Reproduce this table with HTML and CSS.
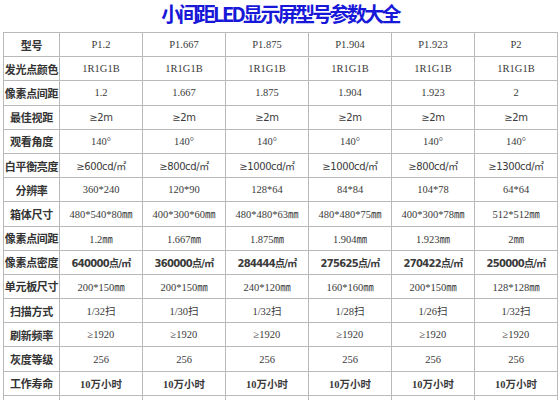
FILE: index.html
```html
<!DOCTYPE html>
<html lang="zh-CN">
<head>
<meta charset="utf-8">
<title>小间距LED显示屏型号参数大全</title>
<link rel="stylesheet" href="styles.css">
</head>
<body>
<div class="page">
<h1 class="title">小间距LED显示屏型号参数大全</h1>
<table class="spec">
  <colgroup>
    <col class="c-label"><col><col><col><col><col><col>
  </colgroup>
  <tbody>
    <tr><th>型号</th><td>P1.2</td><td>P1.667</td><td>P1.875</td><td>P1.904</td><td>P1.923</td><td>P2</td></tr>
    <tr><th>发光点颜色</th><td>1R1G1B</td><td>1R1G1B</td><td>1R1G1B</td><td>1R1G1B</td><td>1R1G1B</td><td>1R1G1B</td></tr>
    <tr><th>像素点间距</th><td>1.2</td><td>1.667</td><td>1.875</td><td>1.904</td><td>1.923</td><td>2</td></tr>
    <tr class="sans"><th>最佳视距</th><td>≥2m</td><td>≥2m</td><td>≥2m</td><td>≥2m</td><td>≥2m</td><td>≥2m</td></tr>
    <tr><th>观看角度</th><td>140°</td><td>140°</td><td>140°</td><td>140°</td><td>140°</td><td>140°</td></tr>
    <tr class="sans"><th>白平衡亮度</th><td>≥600cd/㎡</td><td>≥800cd/㎡</td><td>≥1000cd/㎡</td><td>≥1000cd/㎡</td><td>≥800cd/㎡</td><td>≥1300cd/㎡</td></tr>
    <tr><th>分辨率</th><td>360*240</td><td>120*90</td><td>128*64</td><td>84*84</td><td>104*78</td><td>64*64</td></tr>
    <tr><th>箱体尺寸</th><td>480*540*80㎜</td><td>400*300*60㎜</td><td>480*480*63㎜</td><td>480*480*75㎜</td><td>400*300*78㎜</td><td>512*512㎜</td></tr>
    <tr><th>像素点间距</th><td>1.2㎜</td><td>1.667㎜</td><td>1.875㎜</td><td>1.904㎜</td><td>1.923㎜</td><td>2㎜</td></tr>
    <tr class="sans bold"><th>像素点密度</th><td>640000点/㎡</td><td>360000点/㎡</td><td>284444点/㎡</td><td>275625点/㎡</td><td>270422点/㎡</td><td>250000点/㎡</td></tr>
    <tr><th>单元板尺寸</th><td>200*150㎜</td><td>200*150㎜</td><td>240*120㎜</td><td>160*160㎜</td><td>200*150㎜</td><td>128*128㎜</td></tr>
    <tr><th>扫描方式</th><td>1/32扫</td><td>1/30扫</td><td>1/32扫</td><td>1/28扫</td><td>1/26扫</td><td>1/32扫</td></tr>
    <tr><th>刷新频率</th><td>≥1920</td><td>≥1920</td><td>≥1920</td><td>≥1920</td><td>≥1920</td><td>≥1920</td></tr>
    <tr><th>灰度等级</th><td>256</td><td>256</td><td>256</td><td>256</td><td>256</td><td>256</td></tr>
    <tr class="bold"><th>工作寿命</th><td>10万小时</td><td>10万小时</td><td>10万小时</td><td>10万小时</td><td>10万小时</td><td>10万小时</td></tr>
    <tr><th>&nbsp;</th><td></td><td></td><td></td><td></td><td></td><td></td></tr>
  </tbody>
</table>
</div>
</body>
</html>
```
FILE: styles.css
```css
html, body {
  margin: 0;
  padding: 0;
  background: #ffffff;
  overflow: hidden;
}

body {
  font-family: "Liberation Serif", "Noto Sans CJK SC", serif;
  color: #333333;
}

.page {
  width: 560px;
  height: 400px;
  overflow: hidden;
}

.title {
  margin: 0;
  height: 32px;
  line-height: 28px;
  text-align: center;
  font-family: "Noto Sans CJK SC", "DejaVu Sans", sans-serif;
  font-size: 20px;
  font-weight: 700;
  letter-spacing: -2.7px;
  color: #1818d8;
}

.spec {
  margin-left: 3px;
  width: 555px;
  border-collapse: collapse;
  table-layout: fixed;
  border: 1px solid #8e8e8e;
}

.spec col {
  width: 83px;
}

.spec col.c-label {
  width: 56px;
}

.spec th,
.spec td {
  height: 23.2px;
  padding: 0;
  border: 1px solid #b9b9b9;
  text-align: center;
  vertical-align: middle;
  white-space: nowrap;
  overflow: hidden;
}

.spec th {
  font-family: "Noto Sans CJK SC", sans-serif;
  font-weight: 700;
  font-size: 11px;
  letter-spacing: -0.3px;
  color: #333333;
}

.spec td {
  font-family: "Liberation Serif", "Noto Sans CJK SC", serif;
  font-size: 10.5px;
  color: #3a3a3a;
}

.spec tr.sans td {
  font-family: "DejaVu Sans", "Noto Sans CJK SC", sans-serif;
  font-size: 10px;
  letter-spacing: -0.4px;
}

.spec tr.bold td {
  font-weight: 700;
}

.spec tr.sans.bold td {
  letter-spacing: -0.7px;
}
```
